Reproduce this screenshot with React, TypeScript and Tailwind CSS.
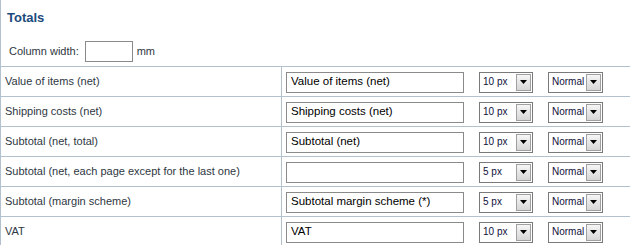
const rows = [
  { label: "Value of items (net)", value: "Value of items (net)", size: "10 px" },
  { label: "Shipping costs (net)", value: "Shipping costs (net)", size: "10 px" },
  { label: "Subtotal (net, total)", value: "Subtotal (net)", size: "10 px" },
  { label: "Subtotal (net, each page except for the last one)", value: "", size: "5 px" },
  { label: "Subtotal (margin scheme)", value: "Subtotal margin scheme (*)", size: "5 px" },
  { label: "VAT", value: "VAT", size: "10 px" },
];

function FakeSelect({ text, width }: { text: string; width: string }) {
  return (
    <div className={`flex items-center justify-between h-[21px] ${width} border border-[#7a7a7a] bg-white pl-[3px] pr-[1px]`}>
      <span className="text-[10px] text-[#10103a] leading-none">{text}</span>
      <span className="flex items-center justify-center w-[15px] h-[17px] border border-[#a0a0a0] bg-gradient-to-b from-[#f6f6f6] to-[#d6d6d6]">
        <svg width="7" height="4" viewBox="0 0 7 4">
          <path d="M0 0h7L3.5 4z" fill="#000" />
        </svg>
      </span>
    </div>
  );
}

export default function App() {
  return (
    <div className="w-[630px] h-[245px] overflow-hidden bg-white border-l border-[#b3c1cf] font-[family-name:'Liberation_Sans',Arial,sans-serif] text-[#2e3742]">
      <h2 className="pt-[10px] pl-[6px] text-[13px] font-bold leading-[16px] text-[#1d4b7c]">Totals</h2>
      <div className="flex items-center h-[21px] mt-[15px] pl-[8px] text-[11px]">
        <span>Column width:</span>
        <div className="ml-[6px] w-[48px] h-[21px] border border-[#8a8a8a] bg-white" />
        <span className="ml-[4px]">mm</span>
      </div>
      <div className="mt-[4px] border-t border-[#b3c1cf]">
        {rows.map((r) => (
          <div key={r.label} className="flex h-[30px] border-b border-[#b3c1cf]">
            <div className="flex items-center w-[281px] pl-[4px] border-r border-[#b3c1cf] text-[11px]">
              {r.label}
            </div>
            <div className="flex items-center pl-[4px] pt-[1px]">
              <div className="flex items-center w-[178px] h-[21px] border border-[#8a8a8a] bg-white pl-[4px] text-[11.5px] text-black">
                {r.value}
              </div>
              <div className="ml-[15px]">
                <FakeSelect text={r.size} width="w-[54px]" />
              </div>
              <div className="ml-[15px]">
                <FakeSelect text="Normal" width="w-[55px]" />
              </div>
            </div>
          </div>
        ))}
      </div>
    </div>
  );
}
